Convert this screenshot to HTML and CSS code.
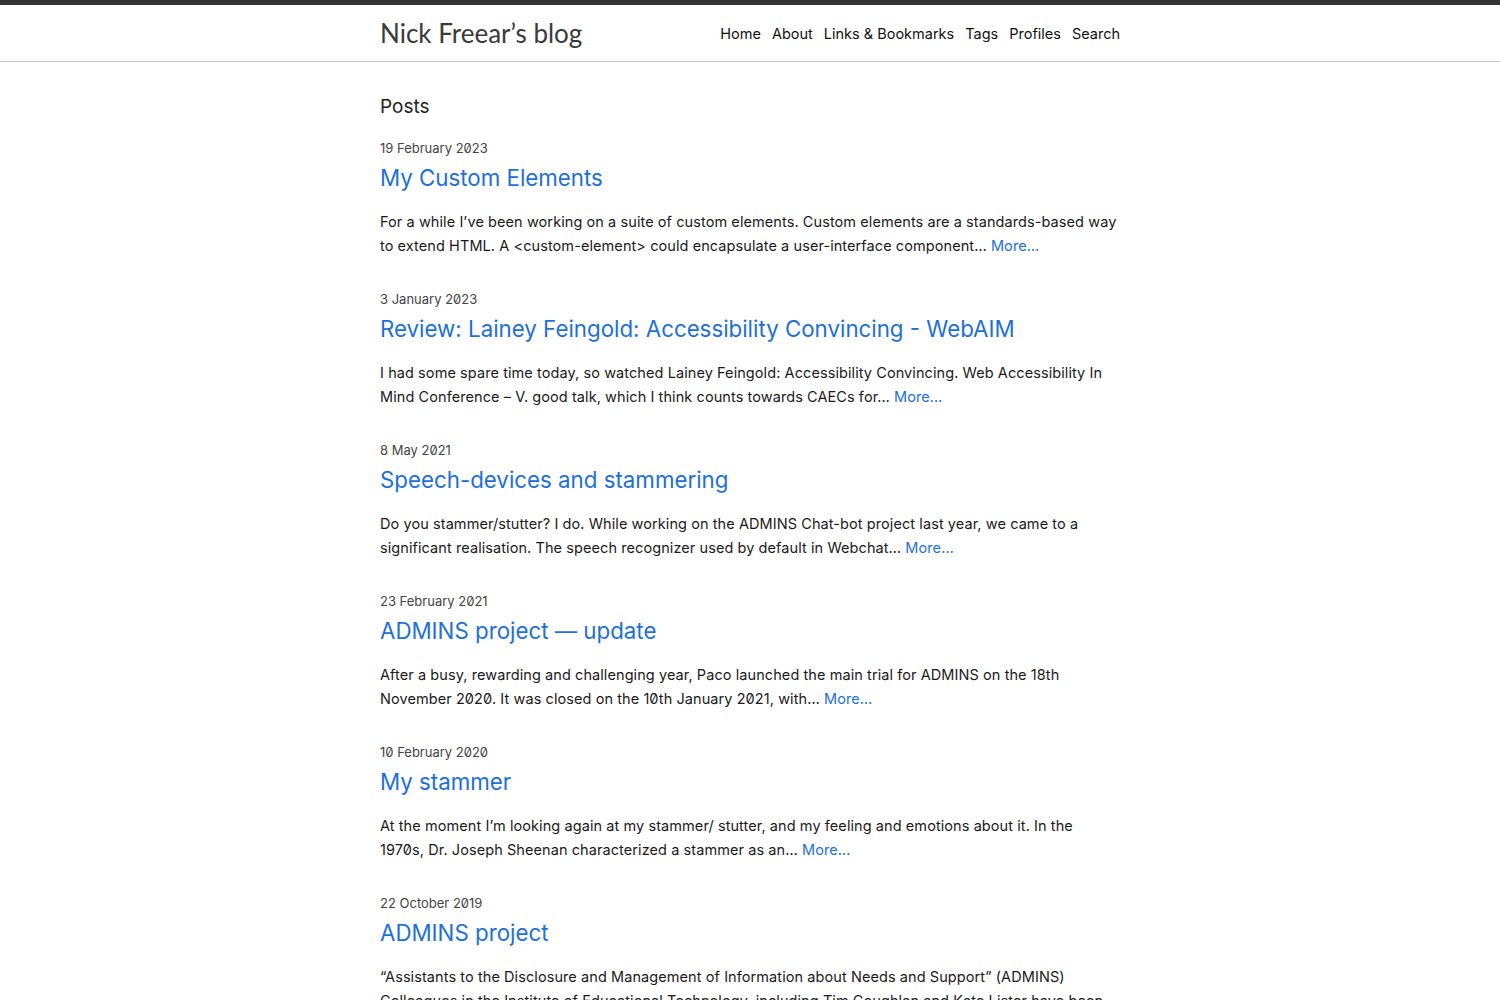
FILE: index.html
```html
<!DOCTYPE html>
<html lang="en">
<head>
<meta charset="utf-8">
<title>Nick Freear's blog</title>
<link rel="stylesheet" href="styles.css">
</head>
<body>
<header class="site-header">
  <div class="wrap header-inner">
    <a class="site-title" href="#">Nick Freear’s blog</a>
    <nav class="site-nav">
      <a href="#">Home</a>
      <a href="#">About</a>
      <a href="#">Links &amp; Bookmarks</a>
      <a href="#">Tags</a>
      <a href="#">Profiles</a>
      <a href="#">Search</a>
    </nav>
  </div>
</header>
<main class="wrap main">
  <h1 class="page-heading">Posts</h1>
  <ul class="post-list">
    <li class="post">
      <span class="post-meta">19 February 2023</span>
      <h2 class="post-title"><a href="#">My Custom Elements</a></h2>
      <p class="excerpt">For a while I’ve been working on a suite of custom elements. Custom elements are a standards-based way to extend HTML. A &lt;custom-element&gt; could encapsulate a user-interface component… <a href="#">More…</a></p>
    </li>
    <li class="post">
      <span class="post-meta">3 January 2023</span>
      <h2 class="post-title"><a href="#">Review: Lainey Feingold: Accessibility Convincing - WebAIM</a></h2>
      <p class="excerpt">I had some spare time today, so watched Lainey Feingold: Accessibility Convincing. Web Accessibility In Mind Conference – V. good talk, which I think counts towards CAECs for… <a href="#">More…</a></p>
    </li>
    <li class="post">
      <span class="post-meta">8 May 2021</span>
      <h2 class="post-title"><a href="#">Speech-devices and stammering</a></h2>
      <p class="excerpt">Do you stammer/stutter? I do. While working on the ADMINS Chat-bot project last year, we came to a significant realisation. The speech recognizer used by default in Webchat… <a href="#">More…</a></p>
    </li>
    <li class="post">
      <span class="post-meta">23 February 2021</span>
      <h2 class="post-title"><a href="#">ADMINS project — update</a></h2>
      <p class="excerpt">After a busy, rewarding and challenging year, Paco launched the main trial for ADMINS on the 18th November 2020. It was closed on the 10th January 2021, with… <a href="#">More…</a></p>
    </li>
    <li class="post">
      <span class="post-meta">10 February 2020</span>
      <h2 class="post-title"><a href="#">My stammer</a></h2>
      <p class="excerpt">At the moment I’m looking again at my stammer/ stutter, and my feeling and emotions about it. In the 1970s, Dr. Joseph Sheenan characterized a stammer as an… <a href="#">More…</a></p>
    </li>
    <li class="post">
      <span class="post-meta">22 October 2019</span>
      <h2 class="post-title"><a href="#">ADMINS project</a></h2>
      <p class="excerpt">“Assistants to the Disclosure and Management of Information about Needs and Support” (ADMINS) Colleagues in the Institute of Educational Technology, including Tim Coughlan and Kate Lister have been working on a project… <a href="#">More…</a></p>
    </li>
  </ul>
</main>
</body>
</html>
```

FILE: styles.css
```css
html, body {
  margin: 0;
  padding: 0;
  background: #fff;
}
body {
  font-family: Inter, "Noto Sans", "Liberation Sans", sans-serif;
  font-feature-settings: "zero" 1;
  color: #111;
  font-size: 14.5px;
}
a {
  color: #1e6fd9;
  text-decoration: none;
}
.wrap {
  width: 740px;
  margin: 0 auto;
}
.site-header {
  border-top: 5px solid #333;
  border-bottom: 1px solid #c4c4c4;
  height: 56px;
  box-sizing: content-box;
}
.header-inner {
  display: flex;
  align-items: center;
  justify-content: space-between;
  height: 56px;
}
.site-title {
  font-family: Lato, "Open Sans", sans-serif;
  font-size: 26px;
  color: #3a3a3a;
}
.site-nav {
  display: flex;
  gap: 11px;
}
.site-nav a {
  color: #111;
  font-size: 14.5px;
}
.main {
  padding-top: 32px;
}
.page-heading {
  font-size: 19px;
  font-weight: 400;
  color: #222;
  margin: 0 0 19px;
  line-height: 26px;
}
.post-list {
  list-style: none;
  margin: 0;
  padding: 0;
}
.post {
  margin: 0 0 32px;
}
.post-meta {
  display: block;
  font-size: 13px;
  color: #444;
  line-height: 18px;
}
.post-title {
  font-size: 22.3px;
  font-weight: 400;
  margin: 7px 0 18px;
  line-height: 28px;
}
.excerpt {
  margin: 0;
  line-height: 24px;
  color: #1a1a1a;
  letter-spacing: 0.08px;
}
```
